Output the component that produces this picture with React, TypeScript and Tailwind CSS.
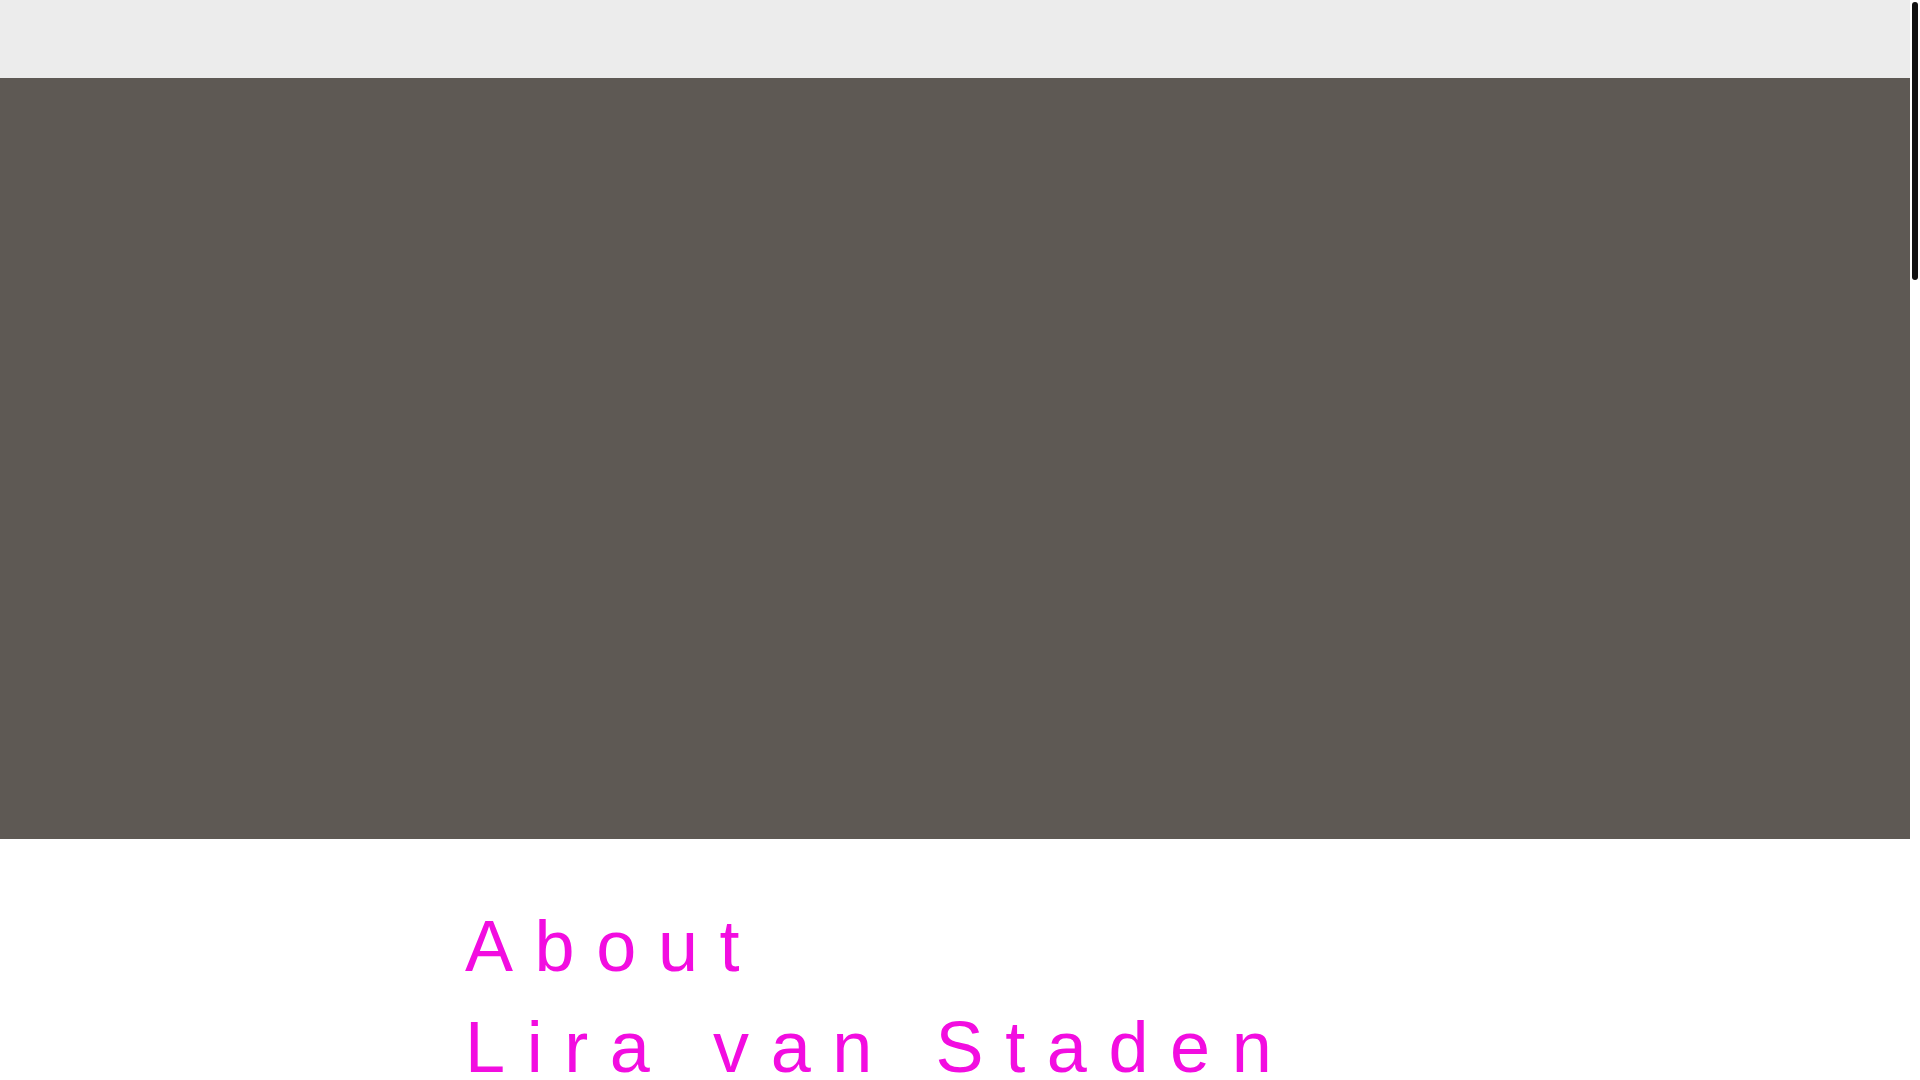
import React from "react";

const headingClass =
  "block whitespace-nowrap text-[72px] leading-[1.4] tracking-[0.3em] text-[#f20de0] font-normal";

export default function App() {
  return (
    <div className="flex h-[1080px] w-full overflow-hidden bg-white" style={{ fontFamily: '"Liberation Sans", Arial, sans-serif' }}>
      <div className="flex min-w-0 flex-1 flex-col">
        <header className="h-[78px] shrink-0 bg-[#ececec]" />
        <section className="h-[761px] shrink-0 bg-[#5e5954]" />
        <main className="pt-[57px]">
          <div className="mx-auto w-[980px]">
            <h2 className={headingClass}>About</h2>
            <h1 className={headingClass}>Lira van Staden</h1>
          </div>
        </main>
      </div>
      {/* scroll track */}
      <div className="w-[10px] shrink-0 pl-[2px] pt-[2px]">
        <div className="h-[278px] w-[6px] rounded-full bg-[#111111]" />
      </div>
    </div>
  );
}
